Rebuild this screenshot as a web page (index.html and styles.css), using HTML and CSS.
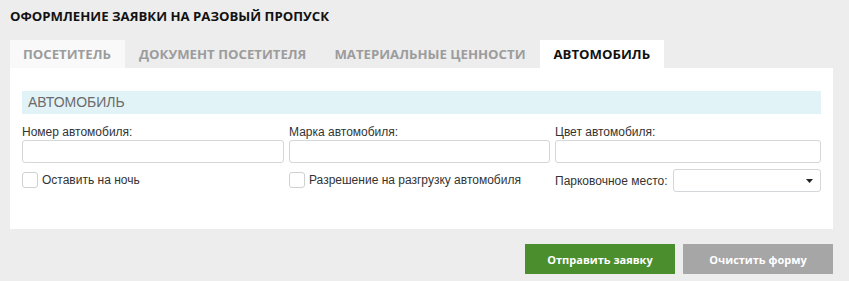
FILE: index.html
```html
<!DOCTYPE html>
<html lang="ru">
  <head>
    <meta charset="UTF-8" />
    <title>Оформление заявки</title>
    <link rel="stylesheet" href="styles.css">
  </head>
  <body>
    <div class="page">
      <h1 class="title">Оформление заявки на разовый пропуск</h1>

      <div class="tabs">
        <div class="tab tab-first">Посетитель</div>
        <div class="tab">Документ посетителя</div>
        <div class="tab">Материальные ценности</div>
        <div class="tab active">Автомобиль</div>
      </div>

      <div class="panel">
        <div class="section-head">АВТОМОБИЛЬ</div>

        <div class="grid">
          <div class="field">
            <label>Номер автомобиля:</label>
            <input type="text" class="input" />
          </div>
          <div class="field">
            <label>Марка автомобиля:</label>
            <input type="text" class="input" />
          </div>
          <div class="field">
            <label>Цвет автомобиля:</label>
            <input type="text" class="input" />
          </div>

          <div class="check">
            <span class="box"></span>
            <span>Оставить на ночь</span>
          </div>
          <div class="check">
            <span class="box"></span>
            <span>Разрешение на разгрузку автомобиля</span>
          </div>
          <div class="parking">
            <span>Парковочное место:</span>
            <div class="select">
              <svg width="7" height="4" viewBox="0 0 7 4"><path d="M0 0h7L3.5 4z" fill="#222"/></svg>
            </div>
          </div>
        </div>
      </div>

      <div class="actions">
        <button class="btn btn-send">Отправить заявку</button>
        <button class="btn btn-clear">Очистить форму</button>
      </div>
    </div>
  </body>
</html>
```

FILE: styles.css
```css
body {
  margin: 0;
  background-color: #ededed;
  font-family: "Open Sans", sans-serif;
}
.page {
  width: 823px;
  padding: 0 10px;
}
.title {
  margin: 0;
  padding-top: 7px;
  height: 33px;
  font-size: 13.2px;
  font-weight: 700;
  color: #111;
  text-transform: uppercase;
  line-height: 18px;
}
.tabs {
  display: flex;
  height: 28px;
}
.tab {
  padding: 0 14px;
  font-size: 13.2px;
  font-weight: 700;
  line-height: 28px;
  color: #9c9c9c;
  text-transform: uppercase;
  white-space: nowrap;
}
.tab-first {
  width: 89px;
  padding-left: 13px;
  padding-right: 13px;
  background-color: #f9f9f9;
}
.tab.active {
  width: 96px;
  background-color: #fff;
  color: #111;
}
.panel {
  background-color: #fff;
  padding: 23px 12px 37px;
}
.section-head {
  background-color: #e2f3f8;
  height: 23px;
  line-height: 23px;
  padding-left: 6px;
  font-family: "Liberation Sans", Arial, sans-serif;
  font-size: 14px;
  color: #6b6b6b;
}
.grid {
  display: grid;
  grid-template-columns: 262px 261px 266px;
  column-gap: 5px;
  margin-top: 11px;
  font-family: "Liberation Sans", Arial, sans-serif;
  font-size: 12px;
  color: #333;
}
.field label {
  display: block;
  line-height: 15px;
}
.input {
  display: block;
  box-sizing: border-box;
  width: 100%;
  height: 23px;
  margin: 0;
  border: 1px solid #d3d7da;
  border-radius: 3px;
  background: #fff;
}
.check {
  display: flex;
  align-items: center;
  gap: 4px;
  height: 29px;
  padding-top: 4px;
  box-sizing: border-box;
}
.box {
  box-sizing: border-box;
  width: 16px;
  height: 16px;
  border: 1px solid #cdd1d4;
  border-radius: 3px;
}
.parking {
  display: flex;
  align-items: center;
  padding-top: 6px;
}
.select {
  display: flex;
  align-items: center;
  justify-content: flex-end;
  box-sizing: border-box;
  width: 148px;
  height: 23px;
  margin-left: auto;
  padding-right: 7px;
  border: 1px solid #d3d7da;
  border-radius: 3px;
}
.actions {
  display: flex;
  justify-content: flex-end;
  gap: 8px;
  margin-top: 15px;
}
.btn {
  width: 150px;
  height: 30px;
  border: none;
  font-family: "Open Sans", sans-serif;
  font-size: 11px;
  font-weight: 700;
  color: #fff;
}
.btn-send {
  background-color: #4a8e2d;
}
.btn-clear {
  background-color: #a6a6a6;
}
```
